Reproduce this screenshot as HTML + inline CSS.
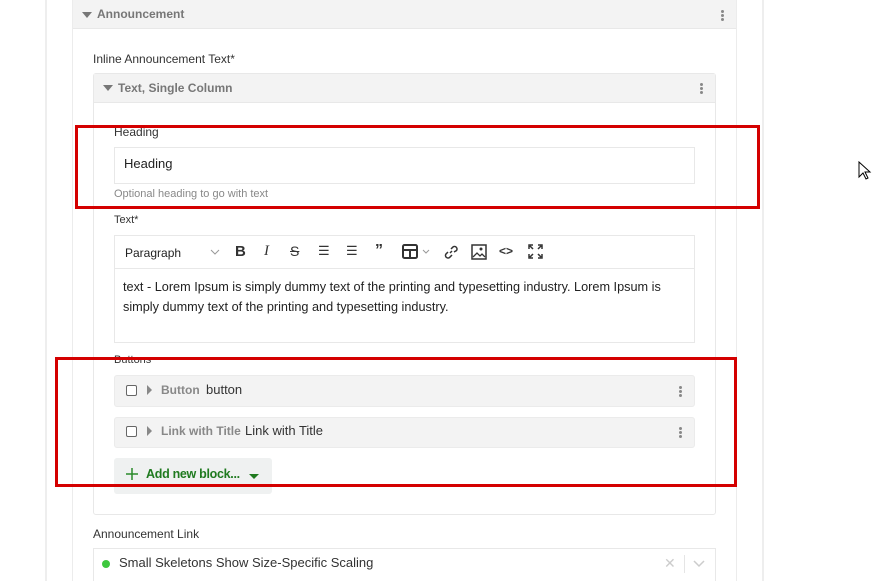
<!DOCTYPE html>
<html style="width:880px;height:581px;overflow:hidden"><head><style>
*{box-sizing:border-box;margin:0;padding:0}
body{width:880px;height:581px;overflow:hidden;background:#fff;font-family:"Liberation Sans",sans-serif;position:relative;color:#333}
.a{position:absolute}
.grey{background:#f3f3f3}
.b{border:1px solid #e8e8e8}
.hdr{font-weight:bold;color:#777;font-size:12px}
.tri{width:0;height:0;border-left:5px solid transparent;border-right:5px solid transparent;border-top:6px solid #777}
.rtri{width:0;height:0;border-top:5px solid transparent;border-bottom:5px solid transparent;border-left:5px solid #888}
.dots{width:3px;font-size:0}
.dots i{display:block;width:3px;height:3px;border-radius:50%;background:#888;margin-bottom:1px}
.lbl{font-size:12px;color:#333}
.red{border:3px solid #d40000}
.cb{width:11px;height:11px;border:1px solid #666;border-radius:2px;background:#fff}
.tb{font-size:15px;color:#333;font-weight:bold}
</style></head><body>
<div class="a" style="left:45px;top:0;width:2px;height:581px;background:#eee"></div>
<div class="a" style="left:762px;top:0;width:2px;height:581px;background:#eee"></div>
<div class="a b" style="left:72px;top:-1px;width:665px;height:600px;border-color:#ececec"></div>
<div class="a grey" style="left:73px;top:0;width:663px;height:29px;border-bottom:1px solid #e8e8e8"></div>
<div class="a tri" style="left:82px;top:12px"></div>
<div class="a hdr" style="left:97px;top:7px">Announcement</div>
<div class="a dots" style="left:721px;top:10px"><i></i><i></i><i></i></div>
<div class="a lbl" style="left:93px;top:52px">Inline Announcement Text*</div>
<div class="a b" style="left:93px;top:73px;width:623px;height:442px;border-radius:3px"></div>
<div class="a grey" style="left:94px;top:74px;width:621px;height:29px;border-bottom:1px solid #e8e8e8"></div>
<div class="a tri" style="left:103px;top:85px"></div>
<div class="a hdr" style="left:118px;top:81px">Text, Single Column</div>
<div class="a dots" style="left:700px;top:83px"><i></i><i></i><i></i></div>
<div class="a lbl" style="left:114px;top:125px">Heading</div>
<div class="a b" style="left:114px;top:147px;width:581px;height:37px"></div>
<div class="a" style="left:124px;top:156px;font-size:13px;color:#222">Heading</div>
<div class="a" style="left:114px;top:188px;font-size:11px;color:#888">Optional heading to go with text</div>
<div class="a lbl" style="left:114px;top:214px;font-size:11px">Text*</div>
<div class="a b" style="left:114px;top:235px;width:581px;height:108px"></div>
<div class="a" style="left:115px;top:268px;width:579px;height:1px;background:#e8e8e8"></div>
<div class="a" style="left:125px;top:246px;font-size:12px;color:#222">Paragraph</div>
<svg class="a" style="left:210px;top:249px" width="10" height="6"><path d="M1 1l4 4 4-4" fill="none" stroke="#999"/></svg>
<div class="a tb" style="left:235px;top:243px">B</div>
<div class="a" style="left:264px;top:243px;font-size:15px;font-style:italic;font-family:'Liberation Serif',serif">I</div>
<div class="a" style="left:290px;top:243px;font-size:14px;text-decoration:line-through">S</div>
<div class="a" style="left:318px;top:243px;font-size:13px">&#9776;</div>
<div class="a" style="left:346px;top:243px;font-size:13px">&#9776;</div>
<div class="a tb" style="left:375px;top:242px;font-size:16px">&#8221;</div>
<svg class="a" style="left:402px;top:244px" width="30" height="16"><rect x="1" y="1" width="14" height="13" rx="1.5" fill="none" stroke="#333" stroke-width="2"/><path d="M1 6h14M8 6v8" stroke="#333" stroke-width="2"/><path d="M21 6l3 3 3-3" fill="none" stroke="#999"/></svg>
<svg class="a" style="left:443px;top:244px" width="16" height="16"><path d="M7 9l2-2M5 8l-2 2a2.5 2.5 0 003.5 3.5L9 11M8 5l2-2a2.5 2.5 0 013.5 3.5L11 8" fill="none" stroke="#333" stroke-width="1.5"/></svg>
<svg class="a" style="left:471px;top:244px" width="16" height="16"><rect x="1" y="1" width="14" height="14" fill="none" stroke="#333" stroke-width="1.5"/><path d="M2 13l4-4 3 3 2-2 3 3" fill="none" stroke="#333" stroke-width="1.3"/><circle cx="10" cy="5" r="1.5" fill="#333"/></svg>
<div class="a" style="left:499px;top:244px;font-size:12px;font-weight:bold">&lt;&gt;</div>
<svg class="a" style="left:528px;top:244px" width="15" height="15"><path d="M1 5V1h4M10 1h4v4M14 10v4h-4M5 14H1v-4M2 2l3 3M13 2l-3 3M13 13l-3-3M2 13l3-3" fill="none" stroke="#333" stroke-width="1.5"/></svg>
<div class="a" style="left:123px;top:277px;font-size:12.7px;line-height:20px;color:#222;width:565px">text - Lorem Ipsum is simply dummy text of the printing and typesetting industry. Lorem Ipsum is simply dummy text of the printing and typesetting industry.</div>
<div class="a lbl" style="left:114px;top:354px;font-size:11px">Buttons</div>
<div class="a grey" style="left:114px;top:375px;width:581px;height:32px;border:1px solid #ebebeb;border-radius:3px"></div>
<div class="a cb" style="left:126px;top:385px"></div>
<div class="a rtri" style="left:147px;top:385px"></div>
<div class="a hdr" style="left:161px;top:383px;color:#888">Button</div>
<div class="a" style="left:206px;top:382px;font-size:13px">button</div>
<div class="a dots" style="left:679px;top:386px"><i></i><i></i><i></i></div>
<div class="a grey" style="left:114px;top:417px;width:581px;height:31px;border:1px solid #ebebeb;border-radius:3px"></div>
<div class="a cb" style="left:126px;top:426px"></div>
<div class="a rtri" style="left:147px;top:426px"></div>
<div class="a hdr" style="left:161px;top:424px;color:#888">Link with Title</div>
<div class="a" style="left:245px;top:423px;font-size:13px">Link with Title</div>
<div class="a dots" style="left:679px;top:427px"><i></i><i></i><i></i></div>
<div class="a" style="left:114px;top:458px;width:158px;height:36px;background:#eff1f1;border-radius:3px"></div>
<svg class="a" style="left:126px;top:468px" width="12" height="12"><path d="M6 0v12M0 6h12" stroke="#2a8a2a" stroke-width="1.5"/></svg>
<div class="a" style="left:146px;top:467px;font-size:12.5px;font-weight:bold;color:#1f7a1f;letter-spacing:-0.3px">Add new block...</div>
<div class="a" style="left:249px;top:474px;width:0;height:0;border-left:5px solid transparent;border-right:5px solid transparent;border-top:5px solid #1f7a1f"></div>
<div class="a lbl" style="left:93px;top:527px">Announcement Link</div>
<div class="a b" style="left:93px;top:548px;width:623px;height:40px"></div>
<div class="a" style="left:102px;top:560px;width:8px;height:8px;border-radius:50%;background:#3ec73e"></div>
<div class="a" style="left:119px;top:555px;font-size:13px;color:#333">Small Skeletons Show Size-Specific Scaling</div>
<div class="a" style="left:664px;top:555px;font-size:14px;color:#ccc">&#10005;</div>
<div class="a" style="left:684px;top:555px;width:1px;height:18px;background:#e5e5e5"></div>
<svg class="a" style="left:693px;top:560px" width="12" height="8"><path d="M1 1l5 5 5-5" fill="none" stroke="#ccc" stroke-width="1.5"/></svg>
<div class="a red" style="left:75px;top:125px;width:685px;height:84px"></div>
<div class="a red" style="left:55px;top:357px;width:682px;height:130px"></div>
<svg class="a" style="left:858px;top:161px" width="14" height="20"><path d="M1 1v15l4-4 3 6 2-1-3-6h5z" fill="#fff" stroke="#000" stroke-width="1"/></svg>
</body></html>
